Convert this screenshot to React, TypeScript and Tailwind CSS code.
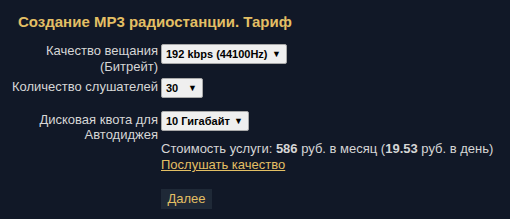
const selectCls =
  'inline-flex items-center whitespace-nowrap rounded-[2px] border border-[#a9a9a9] bg-[#efefef] pl-[4px] pr-[5px] text-[11px] font-bold leading-[16px] text-black'

function Select({ value, w }: { value: string; w: string }) {
  return (
    <span className={`${selectCls} ${w} justify-between h-[20px]`}>
      <span>{value}</span>
      <span className="text-[9px] leading-none">▼</span>
    </span>
  )
}

export default function App() {
  return (
    <div className="min-h-[219px] w-[510px] bg-[#111827] font-['Liberation_Sans',Arial,sans-serif] text-[13px] leading-[16px] text-[#d6d6d6]">
      <h1 className="pl-[18px] pt-[13px] text-[15px] font-bold leading-[18px] text-[#e3bf64]">
        Создание MP3 радиостанции. Тариф
      </h1>
      <div className="mt-[12px] grid grid-cols-[158px_auto] gap-x-[3px]">
        <div className="text-right">
          Качество вещания
          <br />
          (Битрейт)
        </div>
        <div className="pt-[1px]">
          <Select value="192 kbps (44100Hz)" w="w-[126px]" />
        </div>

        <div className="mt-[4px] text-right">Количество слушателей</div>
        <div className="mt-[3px]">
          <Select value="30" w="w-[42px]" />
        </div>

        <div className="mt-[14px] text-right leading-[15px]">
          Дисковая квота для
          <br />
          Автодиджея
        </div>
        <div className="mt-[13px]">
          <Select value="10 Гигабайт" w="w-[88px]" />
        </div>

        <div />
        <div className="mt-[-1px]">
          <div>
            Стоимость услуги: <b>586</b> руб. в месяц (<b>19.53</b> руб. в день)
          </div>
          <a href="#" className="text-[#e3bf64] underline">
            Послушать качество
          </a>
          <div className="mt-[16px]">
            <button className="h-[20px] w-[51px] bg-[#1f2937] text-[13px] text-[#e3bf64]">Далее</button>
          </div>
        </div>
      </div>
    </div>
  )
}
